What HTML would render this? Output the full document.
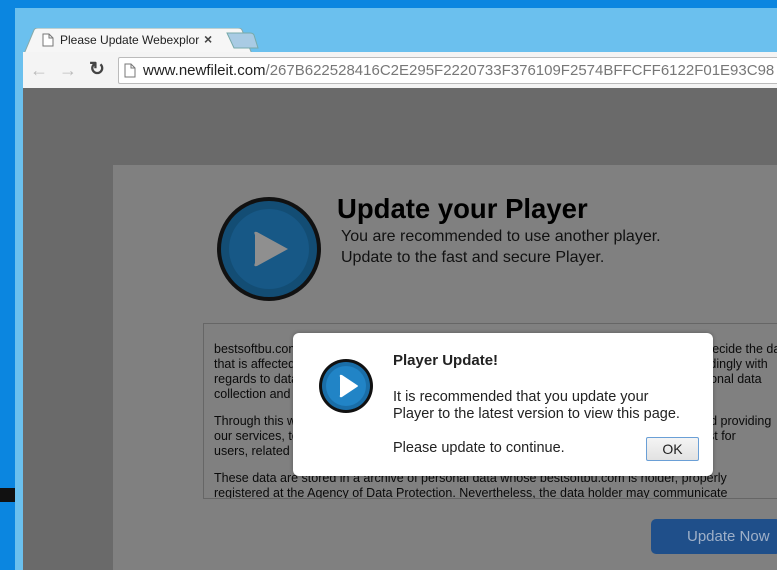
<!DOCTYPE html>
<html><head><style>
*{margin:0;padding:0;box-sizing:border-box}
body{width:777px;height:570px;overflow:hidden;position:relative;background:#0b86e0;font-family:"Liberation Sans",Arial,sans-serif}
.abs{position:absolute}
p{white-space:nowrap}
</style></head><body>
<div class="abs" style="left:15px;top:8px;width:762px;height:562px;background:#6bc0ee"></div>
<div class="abs" style="left:0;top:488px;width:15px;height:14px;background:#111"></div>
<!-- tab -->
<svg class="abs" style="left:24px;top:28px" width="240" height="26"><path d="M0 26 L10 2 Q11 0 14 0 H214 Q217 0 218 2 L228 26Z" fill="#f6f6f6" stroke="#8aa"/><path d="M203 5 H226 Q229 5 230 7 L234 20 H210Z" fill="#a9cbe4" stroke="#7aa"/></svg>
<svg class="abs" style="left:42px;top:33px" width="12" height="14"><path d="M1 1h6l4 4v8H1z M7 1v4h4" fill="#fff" stroke="#777"/></svg>
<div class="abs" style="left:60px;top:33px;font-size:12px;color:#222">Please Update Webexplor</div>
<div class="abs" style="left:204px;top:31px;font-size:14px;color:#444;font-weight:bold">×</div>
<!-- toolbar -->
<div class="abs" style="left:23px;top:52px;width:754px;height:36px;background:#f4f4f4"></div>
<div class="abs" style="left:30px;top:60px;font-size:18px;color:#bbb">←</div>
<div class="abs" style="left:59px;top:60px;font-size:18px;color:#bbb">→</div>
<div class="abs" style="left:89px;top:58px;font-size:19px;color:#444;font-weight:bold">↻</div>
<div class="abs" style="left:118px;top:57px;width:670px;height:27px;background:#fff;border:1px solid #bbb;border-radius:2px"></div>
<svg class="abs" style="left:124px;top:63px" width="12" height="15"><path d="M1 1h6l4 4v9H1z M7 1v4h4" fill="#fff" stroke="#777"/></svg>
<div class="abs" style="left:143px;top:62px;font-size:15px;color:#222;white-space:nowrap">www.newfileit.com<span style="color:#777">/267B622528416C2E295F2220733F376109F2574BFFCFF6122F01E93C98</span></div>
<!-- page -->
<div class="abs" style="left:23px;top:88px;width:754px;height:482px;background:#6a6a6a"></div>
<div class="abs" style="left:113px;top:165px;width:664px;height:405px;background:#808080"></div>
<svg class="abs" style="left:215px;top:195px" width="108" height="108"><circle cx="54" cy="54" r="52" fill="#111"/><circle cx="54" cy="54" r="48" fill="#134d74"/><circle cx="54" cy="54" r="40" fill="#175886"/><path d="M40 40 Q38 36 42 37 L73 54 L42 71 Q38 72 40 68Z" fill="#8f8f8f"/></svg>
<div class="abs" style="left:337px;top:193px;font-size:27.5px;font-weight:bold;color:#000">Update your Player</div>
<div class="abs" style="left:341px;top:226px;font-size:16px;color:#111;line-height:21px">You are recommended to use another player.<br>Update to the fast and secure Player.</div>
<div class="abs" style="left:203px;top:323px;width:580px;height:176px;border:1px solid #666;padding:18px 10px;font-size:12.5px;color:#0a0a0a;line-height:15px;overflow:hidden">
<p style="margin-bottom:12px">bestsoftbu.com informs users about the policy on the protection of personal data so they decide the data<br>that is affected by this policy, voluntarily, and if they will provide personal data to us. Accordingly with<br>regards to data protection, we inform you about the existence of a file with regards to personal data<br>collection and processing.</p>
<p style="margin-bottom:12px">Through this website, we collect data to be able to satisfy the requirements and needs, and providing<br>our services, to send information about products, services and news that may be of interest for<br>users, related to our activities.</p>
<p>These data are stored in a archive of personal data whose bestsoftbu.com is holder, properly<br>registered at the Agency of Data Protection. Nevertheless, the data holder may communicate</p>
</div>
<div class="abs" style="left:651px;top:519px;width:130px;height:35px;background:#1f4f8a;border-radius:5px;color:#9fb0c8;font-size:15px;padding:9px 0 0 36px">Update Now</div>
<!-- modal -->
<div class="abs" style="left:293px;top:333px;width:420px;height:143px;background:#fff;border-radius:6px;box-shadow:0 0 4px rgba(0,0,0,.3)"></div>
<svg class="abs" style="left:318px;top:358px" width="56" height="56"><circle cx="28" cy="28" r="27" fill="#111"/><circle cx="28" cy="28" r="24" fill="#1a6ea8"/><circle cx="28" cy="28" r="20" fill="#2184c6"/><path d="M22 19 Q21 16 24 17 L39 27 Q41 28 39 29 L24 39 Q21 40 22 37Z" fill="#fff"/></svg>
<div class="abs" style="left:393px;top:352px;font-size:15px;font-weight:bold;color:#222">Player Update!</div>
<div class="abs" style="left:393px;top:389px;font-size:14.5px;color:#222;line-height:17px;white-space:nowrap">It is recommended that you update your<br>Player to the latest version to view this page.</div>
<div class="abs" style="left:393px;top:440px;font-size:14.5px;color:#222">Please update to continue.</div>
<div class="abs" style="left:646px;top:437px;width:53px;height:24px;border:1px solid #6a9fd6;border-radius:2px;background:linear-gradient(#f4f4f4,#e2e2e2);font-size:14px;color:#222;text-align:center;line-height:22px">OK</div>
</body></html>
